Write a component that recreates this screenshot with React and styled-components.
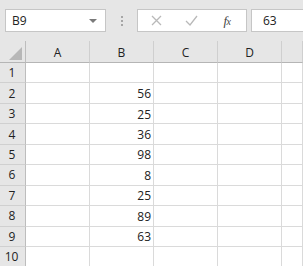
import React from 'react'
import styled, { createGlobalStyle } from 'styled-components'

const GlobalStyle = createGlobalStyle`
  html, body {
    margin: 0;
    padding: 0;
    background: #ffffff;
    overflow: hidden;
  }
  body {
    font-family: "Open Sans", "Noto Sans", "Liberation Sans", sans-serif;
  }
`

const Wrapper = styled.div`
  width: 303px;
  height: 266px;
  overflow: hidden;
  display: flex;
  flex-direction: column;
`
const Toolbar = styled.div`
  height: 41px;
  flex: none;
  background: #e6e6e6;
  display: flex;
  align-items: flex-start;
  padding: 9px 0 0 5px;
  box-sizing: border-box;
`
const NameBox = styled.div`
  width: 101px;
  height: 23px;
  box-sizing: border-box;
  background: #fff;
  border: 1px solid #c6c6c6;
  display: flex;
  align-items: center;
  justify-content: space-between;
  padding: 0 8px 0 6px;
  font-size: 12px;
  color: #222;
`
const Caret = styled.span`
  width: 0;
  height: 0;
  border-left: 4px solid transparent;
  border-right: 4px solid transparent;
  border-top: 4px solid #7a7a7a;
`
const Grip = styled.div`
  width: 31px;
  height: 23px;
  display: flex;
  flex-direction: column;
  align-items: center;
  justify-content: center;
  gap: 2px;
  span {
    width: 2px;
    height: 2px;
    background: #a6a6a6;
  }
`
const ButtonBox = styled.div`
  width: 110px;
  height: 23px;
  box-sizing: border-box;
  background: #fff;
  border: 1px solid #c6c6c6;
  display: flex;
  align-items: center;
`
const ToolButton = styled.div`
  width: ${(p) => p.w}px;
  height: 21px;
  display: flex;
  align-items: center;
  justify-content: center;
  color: ${(p) => p.color};
`
const Fx = styled.span`
  font-family: "Liberation Serif", "DejaVu Serif", serif;
  font-style: italic;
  font-size: 13px;
  color: #444;
  letter-spacing: -0.5px;
  sub {
    font-size: 10px;
    vertical-align: baseline;
  }
`
const FormulaBox = styled.div`
  flex: 1;
  height: 23px;
  margin-left: 4px;
  box-sizing: border-box;
  background: #fff;
  border: 1px solid #c6c6c6;
  border-right: none;
  display: flex;
  align-items: center;
  padding-left: 11px;
  font-size: 12px;
  color: #222;
`
const Sheet = styled.div`
  display: grid;
  grid-template-columns: 26px repeat(4, 64px) 1fr;
  grid-auto-rows: 20.45px;
  grid-template-rows: 22px;
  font-size: 12px;
  color: #222;
`
const HeadCell = styled.div`
  background: #e6e6e6;
  box-sizing: border-box;
  border-right: 1px solid ${(p) => (p.corner ? '#bdbdbd' : '#cfcfcf')};
  border-bottom: 1px solid #b5b5b5;
  display: flex;
  align-items: center;
  justify-content: center;
  padding-top: 1px;
  position: relative;
`
const Corner = styled.span`
  position: absolute;
  right: 3px;
  bottom: 2px;
  width: 0;
  height: 0;
  border-left: 13px solid transparent;
  border-bottom: 13px solid #b7b7b7;
`
const RowHead = styled.div`
  background: #e6e6e6;
  box-sizing: border-box;
  border-right: 1px solid #bdbdbd;
  border-bottom: 1px solid #d0d0d0;
  display: flex;
  align-items: center;
  justify-content: center;
  padding-right: ${(p) => (p.wide ? 2 : 1)}px;
`
const Cell = styled.div`
  box-sizing: border-box;
  border-right: 1px solid #dadada;
  border-bottom: 1px solid #dadada;
  display: flex;
  align-items: center;
  justify-content: flex-end;
  padding-right: 2px;
  padding-top: 1px;
`

const columns = ['A', 'B', 'C', 'D', '']
const values = ['', 56, 25, 36, 98, 8, 25, 89, 63, '']

const XIcon = () => (
  <svg width="11" height="11" viewBox="0 0 11 11">
    <path d="M1 1 L10 10 M10 1 L1 10" stroke="#b9b9b9" strokeWidth="1.3" fill="none" />
  </svg>
)
const CheckIcon = () => (
  <svg width="13" height="11" viewBox="0 0 13 11">
    <path d="M1 6 L5 10 L12 1" stroke="#b9b9b9" strokeWidth="1.3" fill="none" />
  </svg>
)

export default function App() {
  return (
    <Wrapper>
      <GlobalStyle />
      <Toolbar>
        <NameBox>
          <span>B9</span>
          <Caret />
        </NameBox>
        <Grip>
          <span />
          <span />
          <span />
        </Grip>
        <ButtonBox>
          <ToolButton w={36}><XIcon /></ToolButton>
          <ToolButton w={34}><CheckIcon /></ToolButton>
          <ToolButton w={38}><Fx>f<sub>x</sub></Fx></ToolButton>
        </ButtonBox>
        <FormulaBox>63</FormulaBox>
      </Toolbar>
      <Sheet>
        <HeadCell corner><Corner /></HeadCell>
        {columns.map((c, i) => (
          <HeadCell key={i}>{c}</HeadCell>
        ))}
        {values.map((v, r) => (
          <React.Fragment key={r}>
            <RowHead wide={r + 1 >= 10}>{r + 1}</RowHead>
            <Cell />
            <Cell>{v}</Cell>
            <Cell />
            <Cell />
            <Cell />
          </React.Fragment>
        ))}
      </Sheet>
    </Wrapper>
  )
}
